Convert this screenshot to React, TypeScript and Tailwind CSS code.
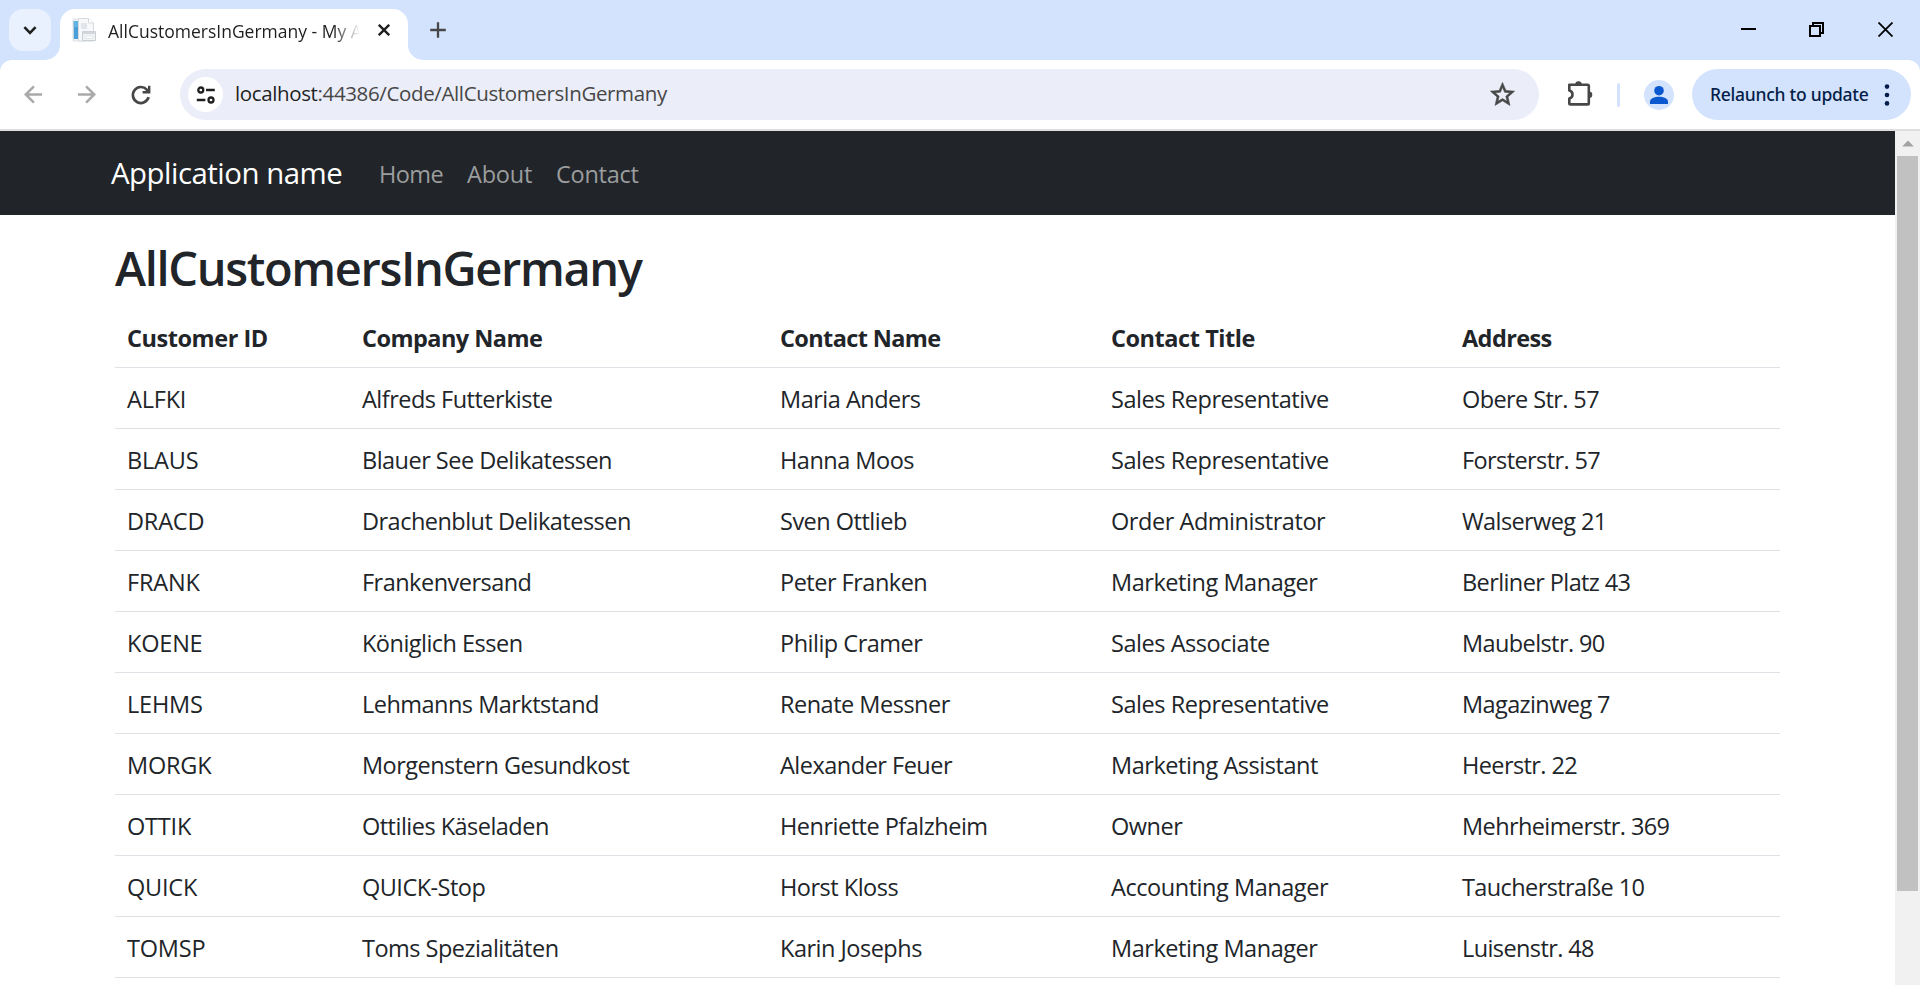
import React from "react";

type Customer = [string, string, string, string, string];

const customers: Customer[] = [
  ["ALFKI", "Alfreds Futterkiste", "Maria Anders", "Sales Representative", "Obere Str. 57"],
  ["BLAUS", "Blauer See Delikatessen", "Hanna Moos", "Sales Representative", "Forsterstr. 57"],
  ["DRACD", "Drachenblut Delikatessen", "Sven Ottlieb", "Order Administrator", "Walserweg 21"],
  ["FRANK", "Frankenversand", "Peter Franken", "Marketing Manager", "Berliner Platz 43"],
  ["KOENE", "Königlich Essen", "Philip Cramer", "Sales Associate", "Maubelstr. 90"],
  ["LEHMS", "Lehmanns Marktstand", "Renate Messner", "Sales Representative", "Magazinweg 7"],
  ["MORGK", "Morgenstern Gesundkost", "Alexander Feuer", "Marketing Assistant", "Heerstr. 22"],
  ["OTTIK", "Ottilies Käseladen", "Henriette Pfalzheim", "Owner", "Mehrheimerstr. 369"],
  ["QUICK", "QUICK-Stop", "Horst Kloss", "Accounting Manager", "Taucherstraße 10"],
  ["TOMSP", "Toms Spezialitäten", "Karin Josephs", "Marketing Manager", "Luisenstr. 48"],
];

const columns = [
  { label: "Customer ID", width: "w-[235px]", head: "tracking-[-0.45px]", cell: "tracking-[-0.2px]" },
  { label: "Company Name", width: "w-[418px]", head: "tracking-[-0.55px]", cell: "tracking-[-0.52px]" },
  { label: "Contact Name", width: "w-[331px]", head: "tracking-[-0.62px]", cell: "tracking-[-0.5px]" },
  { label: "Contact Title", width: "w-[351px]", head: "tracking-[-0.45px]", cell: "tracking-[-0.45px]" },
  { label: "Address", width: "w-[330px]", head: "tracking-[-0.6px]", cell: "tracking-[-0.6px]" },
];

function Favicon() {
  return (
    <svg width="24" height="24" viewBox="0 0 24 24" className="shrink-0">
      <path d="M1 1h12v22H1z" fill="#eef1f4" stroke="#dfe3e6" />
      <path d="M6.500.5h10l5 4.500v18h-15z" fill="#f7f8f9" stroke="#d6dade" />
      <path d="M16.500.5v4.500h5" fill="#fff" stroke="#d6dade" />
      <path d="M9 5h6v6H9z" fill="#e2e5ea" />
      <path d="M1.700 3h4.300v18H1.700z" fill="#4a9fd8" />
      <path d="M1.700 3h4.300v6H1.700z" fill="#62b2e2" />
      <path d="M10.500 13.500h13v9h-13z" fill="#f3f4f6" stroke="#c9ced3" />
      <path d="M10.500 13.500h13v2.500h-13z" fill="#d3d7dc" />
      <path d="M13 18h8v2.500h-8z" fill="#fff" stroke="#d5d9dd" strokeWidth=".6" />
    </svg>
  );
}

function TabStrip() {
  return (
    <div className="flex h-[60px] w-full items-start bg-[#d3e3fd]">
      <div className="ml-[9px] mt-[9px] flex size-[42px] items-center justify-center rounded-[14px] bg-[#e9f1fe]">
        <svg width="16" height="16" viewBox="0 0 16 16" fill="none" stroke="#1f1f1f" strokeWidth="2.6">
          <path d="M2.400 5.200 8 10.800l5.600-5.600" />
        </svg>
      </div>
      <div className="relative ml-[9px] mt-[9px] flex h-[51px] w-[348px] items-start rounded-t-[15px] bg-white">
        <svg className="absolute -left-[15px] bottom-0" width="15" height="15" viewBox="0 0 15 15">
          <path d="M15 0v15H0A15 15 0 0 0 15 0z" fill="#fff" />
        </svg>
        <svg className="absolute -right-[15px] bottom-0" width="15" height="15" viewBox="0 0 15 15">
          <path d="M0 0v15h15A15 15 0 0 1 0 0z" fill="#fff" />
        </svg>
        <div className="ml-[12px] mt-[9px] flex">
          <Favicon />
        </div>
        <div className="ml-[12px] mt-[9px] w-[252px] overflow-hidden whitespace-nowrap text-[17.5px] leading-[26px] text-[#1f1f1f] [mask-image:linear-gradient(to_right,black_225px,transparent_252px)]">
          AllCustomersInGermany - My A
        </div>
        <svg className="ml-[18px] mt-[15px]" width="12" height="12" viewBox="0 0 12 12" stroke="#1f1f1f" strokeWidth="2.400">
          <path d="m.8.8 10.400 10.400M11.200.8.8 11.200" />
        </svg>
      </div>
      <svg className="ml-[22px] mt-[22px]" width="16" height="16" viewBox="0 0 16 16" stroke="#474747" strokeWidth="2.300">
        <path d="M8 .2v15.600M.2 8h15.600" />
      </svg>
      <div className="ml-auto mr-[27px] mt-[22px] flex">
        <svg width="15" height="15" viewBox="0 0 15 15">
          <path d="M0 6h15v2H0z" fill="#000" />
        </svg>
        <svg className="ml-[53px]" width="15" height="15" viewBox="0 0 15 15" fill="none" stroke="#000" strokeWidth="2">
          <path d="M1 4h10v10H1zM4 4V1h10v10h-3" />
        </svg>
        <svg className="ml-[54px]" width="15" height="15" viewBox="0 0 15 15" stroke="#000" strokeWidth="1.800">
          <path d="m.5.5 14 14M14.500.5l-14 14" />
        </svg>
      </div>
    </div>
  );
}

function Toolbar() {
  return (
    <div className="h-[71px] w-full bg-[#d3e3fd]">
      <div className="flex h-full w-full items-start rounded-t-[12px] border-b-2 border-[#dedede] bg-white pt-[9px]">
        <div className="flex h-[51px] w-[180px] items-center">
          <svg className="ml-[24px]" width="19" height="19" viewBox="0 0 19 19" fill="none" stroke="#a9a9a9" strokeWidth="2.500">
            <path d="M18 9.500H2M9.900 1.300 1.700 9.500l8.200 8.200" />
          </svg>
          <svg className="ml-[34px]" width="19" height="19" viewBox="0 0 19 19" fill="none" stroke="#a9a9a9" strokeWidth="2.500">
            <path d="M1 9.500h16M9.100 1.300l8.200 8.200-8.200 8.200" />
          </svg>
          <svg className="ml-[34px]" width="22" height="22" viewBox="0 0 22 22" fill="none" stroke="#474747" strokeWidth="2.700">
            <path d="M18.600 13.200A8 8 0 1 1 16.800 5.600l2.400 2.500" />
            <path d="M19.200 1.700v6.500h-6.600" strokeWidth="2.400" />
            <path d="m14.500 8 4.700-4.500V8z" fill="#474747" stroke="none" />
          </svg>
        </div>
        <div className="flex h-[51px] w-[1359px] items-center rounded-full bg-[#ebeef8] pl-[8px] pr-[22px]">
          <div className="flex size-[35px] items-center justify-center rounded-full bg-white">
            <svg width="20" height="18" viewBox="0 0 20 18" fill="none" stroke="#1f1f1f" strokeWidth="2.300">
              <circle cx="4.800" cy="4" r="2.500" />
              <path d="M10 4h8.800M.8 14h8.600" />
              <circle cx="15" cy="14" r="2.500" />
            </svg>
          </div>
          <div className="mb-[3px] ml-[12px] text-[20.5px] leading-[30px] tracking-[-0.37px] text-[#474747]">
            <span className="text-[#1f1f1f]">localhost</span>:44386/Code/AllCustomersInGermany
          </div>
          <svg className="ml-auto" width="29" height="29" viewBox="0 0 24 24" fill="#474747" stroke="#474747" strokeWidth=".5">
            <path d="M22 9.240l-7.190-.620L12 2 9.190 8.630 2 9.240l5.460 4.730L5.820 21 12 17.270 18.180 21l-1.630-7.030L22 9.240zM12 15.400l-3.760 2.270 1-4.280-3.320-2.880 4.380-.380L12 6.100l1.710 4.040 4.380.380-3.320 2.880 1 4.280L12 15.400z" />
          </svg>
        </div>
        <div className="flex h-[51px] grow items-center">
          <svg className="-mt-[3px] ml-[27px]" width="27" height="27" viewBox="0 0 27 27">
            <path
              d="M3.300 4.800h18.300a1.200 1.200 0 0 1 1.200 1.200v17.200a1.200 1.200 0 0 1-1.200 1.200H4.500a1.200 1.200 0 0 1-1.200-1.200v-4.600c2-.5 3.200-2 3.200-4s-1.200-3.500-3.200-4z"
              fill="none"
              stroke="#474747"
              strokeWidth="2.600"
              strokeLinejoin="round"
            />
            <path d="M9.300 4.500a3.200 3.200 0 0 1 6.400 0zM23 11.400a3.300 3.300 0 0 1 0 6.600z" fill="#474747" />
          </svg>
          <div className="ml-[24px] h-6 w-[3px] rounded-full bg-[#d3e3fd]" />
          <svg className="ml-[24px]" width="30" height="30" viewBox="0 0 30 30">
            <circle cx="15" cy="15" r="15" fill="#d3e3fd" />
            <circle cx="15" cy="10.700" r="4.800" fill="#0b57d0" />
            <path d="M6 24v-2.300c0-3.200 4.500-5 9-5s9 1.800 9 5V24z" fill="#0b57d0" />
          </svg>
          <div className="ml-[18px] flex h-[51px] w-[219px] items-center rounded-full bg-[#d3e3fd] pl-[18px]">
            <span className="mb-[2px] whitespace-nowrap font-['Noto_Sans',sans-serif] text-[17.5px] font-medium leading-[26px] tracking-[-0.26px] text-[#041e49]">
              Relaunch to update
            </span>
            <svg className="ml-auto mr-[21px]" width="6" height="22" viewBox="0 0 6 22" fill="#041e49">
              <circle cx="3" cy="2.600" r="2.300" />
              <circle cx="3" cy="11" r="2.300" />
              <circle cx="3" cy="19.400" r="2.300" />
            </svg>
          </div>
        </div>
      </div>
    </div>
  );
}

function Navbar() {
  return (
    <nav className="flex h-[84px] items-center bg-[#212529] pl-[111px] pt-px text-[23.5px] leading-[36px] text-[#9b9d9e]">
      <a className="w-[268px] text-[29.4px] leading-[45px] tracking-[-0.49px] text-white">Application name</a>
      <a className="w-[88px] tracking-[-0.6px]">Home</a>
      <a className="w-[89px] tracking-[-0.2px]">About</a>
      <a className="tracking-[-0.25px]">Contact</a>
    </nav>
  );
}

function CustomerTable() {
  return (
    <table className="w-[1665px] table-fixed border-collapse text-left text-[23.5px] leading-[36px]">
      <thead>
        <tr className="h-[61px] border-b border-[#dee2e6]">
          {columns.map((c) => (
            <th key={c.label} className={`${c.width} ${c.head} px-[12px] pb-[10px] pt-[14px] font-bold`}>
              {c.label}
            </th>
          ))}
        </tr>
      </thead>
      <tbody>
        {customers.map((row) => (
          <tr key={row[0]} className="h-[61px] border-b border-[#dee2e6]">
            {row.map((value, i) => (
              <td key={i} className={`${columns[i].cell} whitespace-nowrap px-[12px] pb-[11px] pt-[13px]`}>
                {value}
              </td>
            ))}
          </tr>
        ))}
      </tbody>
    </table>
  );
}

function Scrollbar() {
  return (
    <div className="flex w-[25px] flex-col items-center bg-[#f1f1f1]">
      <div className="flex h-[25px] items-center">
        <svg width="12" height="7" viewBox="0 0 12 7">
          <path d="M6 .5 11.800 6.500H.2z" fill="#a3a3a3" />
        </svg>
      </div>
      <div className="h-[735px] w-[21px] bg-[#c1c1c1]" />
    </div>
  );
}

export default function App() {
  return (
    <div className="flex h-[985px] w-[1920px] flex-col overflow-hidden bg-white font-['Open_Sans',sans-serif]">
      <TabStrip />
      <Toolbar />
      <div className="flex h-[854px]">
        <div className="w-[1895px] overflow-hidden text-[#212529]">
          <Navbar />
          <main className="pl-[115px] pt-[24px]">
            <h2 className="mb-[9px] text-[47px] font-semibold leading-[58px] tracking-[-1.35px]">AllCustomersInGermany</h2>
            <CustomerTable />
          </main>
        </div>
        <Scrollbar />
      </div>
    </div>
  );
}
